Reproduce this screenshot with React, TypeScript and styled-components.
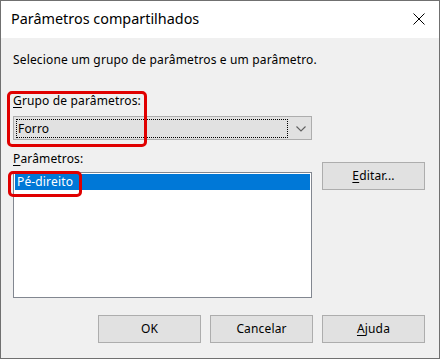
import React from 'react';
import styled, { createGlobalStyle } from 'styled-components';

const GlobalStyle = createGlobalStyle`
  html, body {
    margin: 0;
    padding: 0;
    background: #ffffff;
  }
  * {
    box-sizing: border-box;
  }
`;

const StWindow = styled.div`
  width: 440px;
  height: 359px;
  border: 1px solid #707070;
  display: flex;
  flex-direction: column;
  font-family: 'Noto Sans', 'Open Sans', sans-serif;
  font-size: 12px;
  letter-spacing: 0.15px;
  color: #000;
  overflow: hidden;
`;

const StTitleBar = styled.div`
  height: 37px;
  background: #ffffff;
  display: flex;
  align-items: center;
  justify-content: space-between;
  padding: 0 14px 0 10px;
`;

const StTitle = styled.div`
  font-size: 14.4px;
  letter-spacing: 0;
  line-height: 20px;
  padding-bottom: 1px;
`;

const StCloseButton = styled.div`
  width: 12px;
  height: 12px;
  display: flex;
  margin-bottom: 1px;
`;

const StBody = styled.div`
  flex: 1;
  background: #f0f0f0;
  padding: 14px 14px 0 12px;
  display: flex;
  flex-direction: column;
`;

const StText = styled.div`
  line-height: 16px;
  white-space: nowrap;
`;

const StLabel = styled(StText)<{ $gap: number }>`
  margin-top: ${(props) => props.$gap}px;
`;

const StGroup = styled.div`
  position: relative;
  width: 299px;
`;

const StRedBox = styled.div<{ $w: number; $h: number }>`
  position: absolute;
  left: -6px;
  top: -2px;
  width: ${(props) => props.$w}px;
  height: ${(props) => props.$h}px;
  border: 3px solid #e00000;
  border-radius: 5px;
  pointer-events: none;
`;

const StCombo = styled.div`
  margin-top: 7px;
  height: 24px;
  background: #e1e1e1;
  border: 1px solid #adadad;
  display: flex;
  align-items: center;
  padding: 2px 5px 1px 2px;
  gap: 8px;
`;

const StFocusRect = styled.div`
  flex: 1;
  height: 19px;
  border: 1px dotted #000;
  display: flex;
  align-items: center;
  padding-left: 1px;
`;

const StRow = styled.div`
  display: flex;
  gap: 10px;
`;

const StListColumn = styled.div`
  width: 299px;
`;

const StListBox = styled.div`
  position: relative;
  margin-top: 5px;
  height: 126px;
  background: #ffffff;
  border: 1px solid #828790;
  padding: 1px;
`;

const StListItem = styled.div<{ $selected?: boolean }>`
  height: 16px;
  line-height: 16px;
  padding-left: 2px;
  background: ${(props) => (props.$selected ? '#0078d7' : 'transparent')};
  color: ${(props) => (props.$selected ? '#ffffff' : '#000')};
`;

const StButton = styled.div`
  width: 103px;
  height: 28px;
  background: #e1e1e1;
  border: 1px solid #adadad;
  display: flex;
  align-items: center;
  justify-content: center;
  line-height: 16px;
  padding-bottom: 1px;
`;

const StSideButton = styled(StButton)`
  margin-top: 22px;
`;

const StFooter = styled.div`
  margin-top: 17px;
  display: flex;
  justify-content: flex-end;
  gap: 9px;
`;

const Key = styled.span`
  text-decoration: underline;
  text-underline-offset: 2px;
`;

const CloseIcon = () => (
  <svg width="12" height="12" viewBox="0 0 12 12">
    <path d="M0.5 0.5 L11.5 11.5 M11.5 0.5 L0.5 11.5" stroke="#000" strokeWidth="1" fill="none" />
  </svg>
);

const ChevronIcon = () => (
  <svg width="10" height="6" viewBox="0 0 10 6">
    <polyline points="0.5,0.5 5,5 9.5,0.5" stroke="#606060" strokeWidth="1.1" fill="none" />
  </svg>
);

const App = () => {
  return (
    <>
      <GlobalStyle />
      <StWindow>
        <StTitleBar>
          <StTitle>Parâmetros compartilhados</StTitle>
          <StCloseButton>
            <CloseIcon />
          </StCloseButton>
        </StTitleBar>
        <StBody>
          <StText>Selecione um grupo de parâmetros e um parâmetro.</StText>

          <StLabel $gap={25}>
            <StGroup>
              <StText>
                <Key>G</Key>rupo de parâmetros:
              </StText>
              <StCombo>
                <StFocusRect>Forro</StFocusRect>
                <ChevronIcon />
              </StCombo>
              <StRedBox $w={140} $h={56} />
            </StGroup>
          </StLabel>

          <StRow>
            <StListColumn>
              <StLabel $gap={11}>
                <Key>P</Key>arâmetros:
              </StLabel>
              <StListBox>
                <StListItem $selected>Pé-direito</StListItem>
                <StRedBox $w={74} $h={26} />
              </StListBox>
            </StListColumn>
            <StSideButton>
              <Key>E</Key>ditar...
            </StSideButton>
          </StRow>

          <StFooter>
            <StButton>OK</StButton>
            <StButton>Cancelar</StButton>
            <StButton>
              <Key>A</Key>juda
            </StButton>
          </StFooter>
        </StBody>
      </StWindow>
    </>
  );
};

export default App;
